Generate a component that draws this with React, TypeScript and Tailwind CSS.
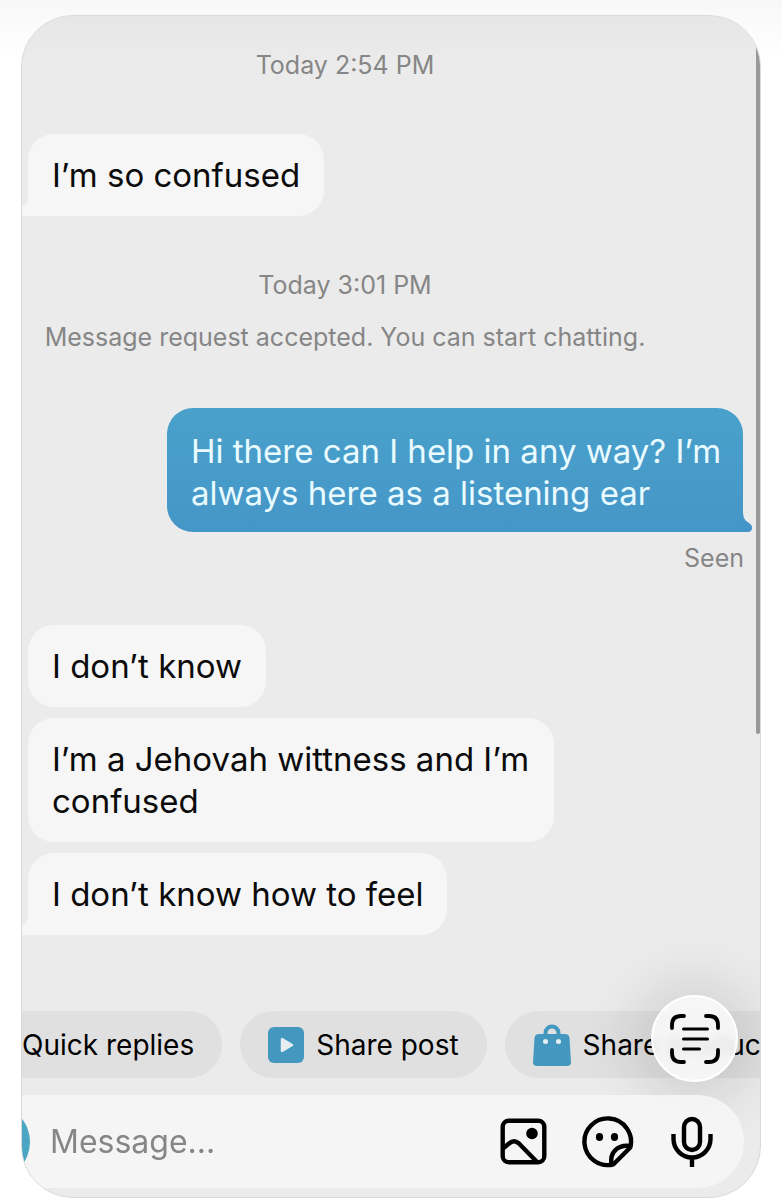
import type { ReactNode } from 'react';

const Timestamp = ({ children }: { children: ReactNode }) => (
    <p className="pr-[92px] text-center text-[25px] leading-9 text-[#868686]">{children}</p>
);

interface BubbleProps {
    text: string;
    mine?: boolean;
    tail?: boolean;
}

const Bubble = ({ text, mine = false, tail = false }: BubbleProps) => (
    <div
        className={
            mine
                ? 'relative mr-[17px] ml-auto w-fit max-w-[576px] rounded-[26px] rounded-br-none bg-linear-to-b from-[#49a1ca] to-[#4596c8] pt-[22px] pr-5 pb-[18px] pl-6 text-[#e9fbff]'
                : `relative ml-1.5 w-fit max-w-[526px] rounded-[26px] bg-[#f6f6f6] px-6 py-5 text-[#0b0b0b] ${tail ? 'rounded-bl-none' : ''}`
        }
    >
        <p className="text-[33px] leading-[42px]">{text}</p>
        {tail && (
            <svg
                viewBox="0 0 10 22"
                className={
                    mine
                        ? 'absolute bottom-0 left-full h-[22px] w-[10px] text-[#4596c8]'
                        : 'absolute right-full bottom-0 h-[22px] w-[10px] -scale-x-100 text-[#f6f6f6]'
                }
                fill="currentColor"
            >
                <path d="M0 0C0 7 1 10 6 13C9 15 9.500 17 9 19C8.500 21 7 22 5 22H0Z" />
            </svg>
        )}
    </div>
);

const PlayIcon = () => (
    <svg viewBox="0 0 36 36" className="size-9 shrink-0">
        <rect width="36" height="36" rx="6" fill="#4498c0" />
        <path d="M14 12.200L24 18L14 23.800Z" fill="#e6eef2" stroke="#e6eef2" strokeWidth="2.500" strokeLinejoin="round" />
    </svg>
);

const BagIcon = () => (
    <svg viewBox="0 0 38 42" className="h-[42px] w-[38px] shrink-0">
        <path d="M12.500 12V9A6.500 6.500 0 0 1 25.500 9V12" fill="none" stroke="#4498c0" strokeWidth="4" />
        <path d="M6 10H32Q36 10 36.500 14L38 38Q38 42 34 42H4Q0 42 0 38L1.500 14Q2 10 6 10Z" fill="#4498c0" />
        <circle cx="12.500" cy="17.500" r="2.500" fill="#e6eef2" />
        <circle cx="25.500" cy="17.500" r="2.500" fill="#e6eef2" />
    </svg>
);

const ImageIcon = () => (
    <svg viewBox="0 0 52 52" className="size-[52px]" fill="none" stroke="#000" strokeWidth="4.400">
        <rect x="4.700" y="4.700" width="41.600" height="41.600" rx="6" />
        <path d="M5 32.500L11 27.500Q16 23 21 27.500L39 46" />
        <circle cx="34" cy="17.500" r="5.800" fill="#000" stroke="none" />
    </svg>
);

const StickerIcon = () => (
    <svg viewBox="0 0 52 52" className="size-[52px]" fill="none" stroke="#000" strokeWidth="4.400" strokeLinejoin="round">
        <path d="M48.300 31.500A23.300 23.300 0 1 0 31.500 48.300Z" />
        <path d="M29.500 48.300C27.500 36.500 35.500 28.500 48.300 30" />
        <ellipse cx="17.500" cy="21" rx="3.600" ry="4" fill="#000" stroke="none" />
        <ellipse cx="32.500" cy="21" rx="3.600" ry="4" fill="#000" stroke="none" />
    </svg>
);

const MicIcon = () => (
    <svg viewBox="0 0 52 52" className="size-[52px]" fill="none" stroke="#000" strokeWidth="4.400">
        <rect x="18" y="3" width="16" height="31" rx="8" />
        <path d="M7.500 18V23A18.500 18.500 0 0 0 44.500 23V18" />
        <path d="M26 41V51" />
    </svg>
);

const ScanIcon = () => (
    <svg viewBox="0 0 50 50" className="size-[50px]" fill="none" stroke="#000" strokeWidth="3.800" strokeLinecap="round">
        <path d="M2 14V11Q2 2 11 2H14M36 2H39Q48 2 48 11V14M48 36V39Q48 48 39 48H36M14 48H11Q2 48 2 39V36" />
        <path d="M13.500 15H37.500M13.500 25H37.500M13.500 35H29.500" strokeWidth="3" />
    </svg>
);

export default function App() {
    return (
        <div className="min-h-screen bg-white bg-linear-to-b from-[#f8f8f8] to-white to-5% px-[21px] pt-[15px] pb-0.5 font-[Inter,sans-serif]">
            <main className="relative overflow-hidden rounded-[52px] border border-[#dadada] bg-[#ebebeb]">
                <section className="bg-linear-to-b from-[#e6e6e6] to-[#ebebeb] to-5% pt-[31px]">
                    <Timestamp>Today 2:54 PM</Timestamp>
                    <div className="mt-[51px]">
                        <Bubble text="I’m so confused" tail />
                    </div>

                    <div className="mt-[51px] mb-[53px] flex flex-col gap-4">
                        <Timestamp>Today 3:01 PM</Timestamp>
                        <Timestamp>Message request accepted. You can start chatting.</Timestamp>
                    </div>

                    <Bubble text="Hi there can I help in any way? I’m always here as a listening ear" mine tail />
                    <p className="mt-2 mr-4 text-right text-[25px] leading-9 text-[#868686]">Seen</p>

                    <div className="mt-[49px] flex flex-col gap-[11px]">
                        <Bubble text="I don’t know" />
                        <Bubble text="I’m a Jehovah wittness and I’m confused" />
                        <Bubble text="I don’t know how to feel" tail />
                    </div>
                </section>

                <div className="relative mt-[76px]">
                    <div className="flex gap-[18px] overflow-hidden text-[28px] whitespace-nowrap text-black">
                        <button className="h-[67px] shrink-0 rounded-r-full bg-[#e0e0e0] pr-7">Quick replies</button>
                        <button className="flex h-[67px] shrink-0 items-center gap-3 rounded-full bg-[#e0e0e0] px-7">
                            <PlayIcon />
                            Share post
                        </button>
                        <button className="flex h-[67px] shrink-0 items-center gap-3 rounded-full bg-[#e0e0e0] px-7">
                            <BagIcon />
                            Share product
                        </button>
                    </div>
                    <button
                        aria-label="Scan text"
                        className="absolute -top-4 right-[22px] flex size-[87px] items-center justify-center rounded-full border-2 border-white bg-[#f7f7f7]/90 shadow-[0_4px_60px_14px_rgba(0,0,0,0.13)] backdrop-blur-xs"
                    >
                        <ScanIcon />
                    </button>
                </div>

                <form className="relative mt-[17px] mr-4 mb-[9px] flex h-[93px] items-center rounded-r-full bg-[#f6f6f6]/90 pr-[26px]">
                    <button type="button" aria-label="Camera" className="-ml-[68px] size-[76px] shrink-0 rounded-full bg-[#4ba6c3]" />
                    <input
                        type="text"
                        aria-label="Message"
                        placeholder="Message..."
                        className="ml-5 min-w-0 flex-1 bg-transparent text-[32px] text-black outline-none placeholder:text-[#868686]"
                    />
                    <div className="flex gap-8">
                        <button type="button" aria-label="Photo"><ImageIcon /></button>
                        <button type="button" aria-label="Sticker"><StickerIcon /></button>
                        <button type="button" aria-label="Voice"><MicIcon /></button>
                    </div>
                </form>

                <div className="absolute top-0 right-0 h-[718px] w-1 rounded-b-full bg-[#999]" />
            </main>
        </div>
    );
}
